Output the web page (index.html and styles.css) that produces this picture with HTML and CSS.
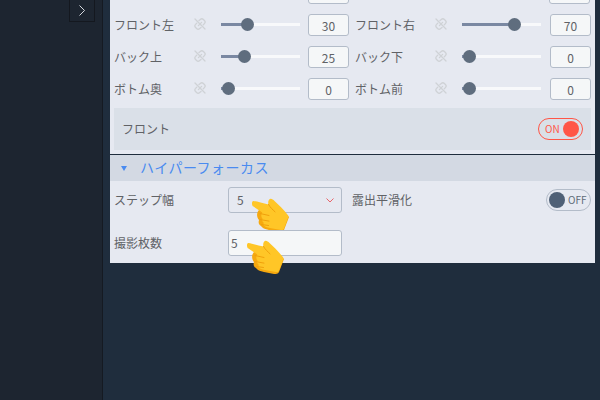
FILE: index.html
```html
<!DOCTYPE html>
<html lang="ja">
<head>
<meta charset="utf-8">
<title>ハイパーフォーカス</title>
<link rel="stylesheet" href="styles.css">
</head>
<body>
<svg class="defs" width="0" height="0" aria-hidden="true">
  <defs>
    <symbol id="unlink" viewBox="0 0 12 12">
      <g fill="none" stroke="#cfd2d6" stroke-width="1.3" stroke-linecap="round">
        <path d="M5 2.6 6.3 1.5a2.2 2.2 0 0 1 3.1 0l1 1a2.2 2.2 0 0 1 0 3.1L9.3 6.8"/>
        <path d="M7 9.4 5.7 10.5a2.2 2.2 0 0 1-3.1 0l-1-1a2.2 2.2 0 0 1 0-3.1L2.7 5.2"/>
        <path d="M1 1l10 10M4.4 7.6l1-1M7.6 4.4l-1 1"/>
      </g>
    </symbol>
    <symbol id="hand" viewBox="0 0 37 34">
      <path fill="#f6a80f" d="M7 12c-3 3-2 8 0 10-1 3 0 5 2 6 1 2 4 3 8 4l10 2c2 0 4 0 5-2l5-13-7-7-10 0z"/>
      <path fill="#ffc627" d="M1.500 3C5 3.500 11 5.300 16.500 6.400 15.800 4.600 16.300 1.800 18 1c1.500-.6 3 .6 4.500 2 4 3.700 9 8.500 13.500 14.200 .8 1.100 .4 2-.2 3.400l-3.700 9.700c-.5 1.400-1.500 2-3 1.700l-10-1.700c-3-.5-6-1-7.200-2.700-.7-1-.5-2-.1-2.800-1.500-1-2-3-1.200-4.300-1.700-1.500-1.700-4.200-.3-5.900L1.500 8.600C-.5 8-.5 2.700 1.500 3z"/>
      <path fill="none" stroke="#f0a00c" stroke-width="1" stroke-linecap="round" d="M8 15.500l9 2M8 21.500l9 1.600M9.500 26.500l7 1M16.500 6.400c1.500 3 4 5 6.500 7.400"/>
    </symbol>
  </defs>
</svg>
<div class="page">
  <aside class="sidebar">
    <button class="collapse" type="button" aria-label="展開">
      <svg width="6" height="11" viewBox="0 0 6 11"><path d="M.5.5 5.500 5.500.5 10.500" fill="none" stroke="#d5d9df" stroke-width="1"/></svg>
    </button>
  </aside>
  <main class="main">
    <div class="panel">
      <section class="upper">
        <div class="row">
          <div class="cell"><span class="input spacer-start"></span></div>
          <div class="cell"><span class="input spacer-start"></span></div>
        </div>
        <div class="row">
          <div class="cell">
            <span class="label">フロント左</span>
            <svg class="link"><use href="#unlink"/></svg>
            <div class="slider" style="--v:30"><i class="fill"></i><i class="knob"></i></div>
            <span class="input">30</span>
          </div>
          <div class="cell">
            <span class="label">フロント右</span>
            <svg class="link"><use href="#unlink"/></svg>
            <div class="slider" style="--v:70"><i class="fill"></i><i class="knob"></i></div>
            <span class="input">70</span>
          </div>
        </div>
        <div class="row">
          <div class="cell">
            <span class="label">バック上</span>
            <svg class="link"><use href="#unlink"/></svg>
            <div class="slider" style="--v:25"><i class="fill"></i><i class="knob"></i></div>
            <span class="input">25</span>
          </div>
          <div class="cell">
            <span class="label">バック下</span>
            <svg class="link"><use href="#unlink"/></svg>
            <div class="slider" style="--v:0"><i class="fill"></i><i class="knob"></i></div>
            <span class="input">0</span>
          </div>
        </div>
        <div class="row">
          <div class="cell">
            <span class="label">ボトム奥</span>
            <svg class="link"><use href="#unlink"/></svg>
            <div class="slider" style="--v:0"><i class="fill"></i><i class="knob"></i></div>
            <span class="input">0</span>
          </div>
          <div class="cell">
            <span class="label">ボトム前</span>
            <svg class="link"><use href="#unlink"/></svg>
            <div class="slider" style="--v:0"><i class="fill"></i><i class="knob"></i></div>
            <span class="input">0</span>
          </div>
        </div>
        <div class="front-bar">
          <span class="front-label">フロント</span>
          <span class="toggle on"><span>ON</span><i></i></span>
        </div>
      </section>
      <section class="hyper">
        <header class="hyper-head">
          <i class="caret"></i>
          <h2>ハイパーフォーカス</h2>
        </header>
        <div class="hyper-body">
          <div class="hyper-row first">
            <span class="h-label">ステップ幅</span>
            <div class="select">
              <span>5</span>
              <svg width="8" height="5" viewBox="0 0 8 5"><path d="M.5.5 4 4 7.500.5" fill="none" stroke="#e8646a" stroke-width="1"/></svg>
              <svg class="hand hand-a"><use href="#hand"/></svg>
            </div>
            <span class="h-label smooth">露出平滑化</span>
            <span class="toggle off"><i></i><span>OFF</span></span>
          </div>
          <div class="hyper-row second">
            <span class="h-label">撮影枚数</span>
            <div class="field">
              <span>5</span>
              <svg class="hand hand-b"><use href="#hand"/></svg>
            </div>
          </div>
        </div>
      </section>
    </div>
  </main>
</div>
</body>
</html>
```
FILE: styles.css
```css
* { box-sizing: border-box; }
html, body { margin: 0; height: 100%; }
body {
  overflow: hidden;
  background: #1f2d3d;
  font-family: "Noto Sans CJK JP", "Noto Sans", sans-serif;
  font-size: 12px;
  color: #606266;
}
.defs { display: block; height: 0; }
.page { display: flex; width: 600px; height: 400px; overflow: hidden; }
.sidebar {
  width: 103px;
  flex: none;
  background: #1d2530;
  border-right: 1px solid #151a22;
  padding-left: 69px;
}
.collapse {
  display: flex;
  align-items: center;
  justify-content: center;
  width: 26px;
  height: 22px;
  padding: 0;
  background: transparent;
  border: 1px solid #14181f;
  border-top: 0;
}
.main { flex: 1; padding-left: 7px; }
.panel { width: 485px; }

.upper {
  height: 155px;
  background: #e6e9f1;
  padding: 0 4px;
  display: flex;
  flex-direction: column;
  gap: 10px;
  overflow: hidden;
  border-bottom: 1px solid #1f2d3d;
}
.row { display: flex; height: 22px; flex: none; }
.row:first-child { margin-top: -18px; }
.cell { display: flex; align-items: center; width: 241px; flex: none; }
.label { width: 81px; flex: none; line-height: 20px; margin-top: -1px; white-space: nowrap; }
.link { width: 12px; height: 12px; flex: none; margin: -2px 15px 0 -1px; }
.slider {
  position: relative;
  width: 79px;
  height: 3px;
  flex: none;
  margin: -1px 8px 0 0;
  background: #f8f9fb;
}
.cell + .cell .slider { margin-right: 9px; }
.fill {
  position: absolute;
  left: 0;
  top: 0;
  bottom: 0;
  width: calc(var(--v) * .65px + 7px);
  background: #7a88a2;
}
.knob {
  position: absolute;
  top: -5px;
  left: calc(var(--v) * .65px + .5px);
  width: 13px;
  height: 13px;
  border-radius: 50%;
  background: #5f6d7e;
}
.input {
  display: flex;
  align-items: center;
  justify-content: center;
  width: 41px;
  height: 22px;
  flex: none;
  background: #f5f7f8;
  border: 1px solid #b3bcc9;
  border-radius: 3px;
  line-height: 1;
  padding-top: 1px;
}
.spacer-start { margin-left: 194px; }

.front-bar {
  display: flex;
  align-items: center;
  justify-content: space-between;
  height: 42px;
  margin-top: -2px;
  padding: 0 8px;
  background: #dae0e8;
}
.front-label { margin-top: -2px; }

.toggle {
  display: flex;
  align-items: center;
  width: 45px;
  height: 22px;
  border-radius: 11px;
  font-size: 10px;
  line-height: 1;
}
.toggle i { width: 16px; height: 16px; border-radius: 50%; flex: none; }
.toggle.on {
  justify-content: space-between;
  padding: 0 3px 0 6px;
  color: #ff5647;
  border: 1px solid #ff5647;
}
.toggle.on i { background: #ff5647; }
.toggle.off {
  gap: 3px;
  padding-left: 2px;
  color: #606b78;
  border: 1px solid #b3bcc9;
}
.toggle.off i { background: #4f6076; }

.hyper { height: 108px; background: #e6e9f1; }
.hyper-head {
  display: flex;
  align-items: center;
  height: 26px;
  padding-left: 11px;
  background: #d3d9e3;
}
.caret {
  width: 0;
  height: 0;
  margin-right: 13px;
  border-left: 3.500px solid transparent;
  border-right: 3.500px solid transparent;
  border-top: 5px solid #4a8bf0;
}
.hyper-head h2 {
  margin: -2px 0 0;
  font-size: 14px;
  font-weight: 400;
  color: #4a8bf0;
  letter-spacing: .5px;
  line-height: 20px;
}
.hyper-body { padding: 6px 4px 0; }
.hyper-row { display: flex; align-items: center; }
.hyper-row.first { height: 26px; }
.hyper-row.second { height: 26px; margin-top: 17px; }
.h-label { width: 114px; flex: none; margin-top: -2px; }
.smooth { width: 204px; padding-left: 10px; }
.select, .field {
  position: relative;
  display: flex;
  align-items: center;
  width: 114px;
  height: 26px;
  flex: none;
  border: 1px solid #b3bcc9;
  border-radius: 3px;
  line-height: 1;
}
.select { justify-content: space-between; padding: 0 7px 0 8px; }
.field { padding-left: 2px; background: #f5f7f8; }
.hand { position: absolute; width: 37px; height: 34px; }
.hand-a { left: 23px; top: 10px; }
.hand-b { left: 18px; top: 9px; }
```
